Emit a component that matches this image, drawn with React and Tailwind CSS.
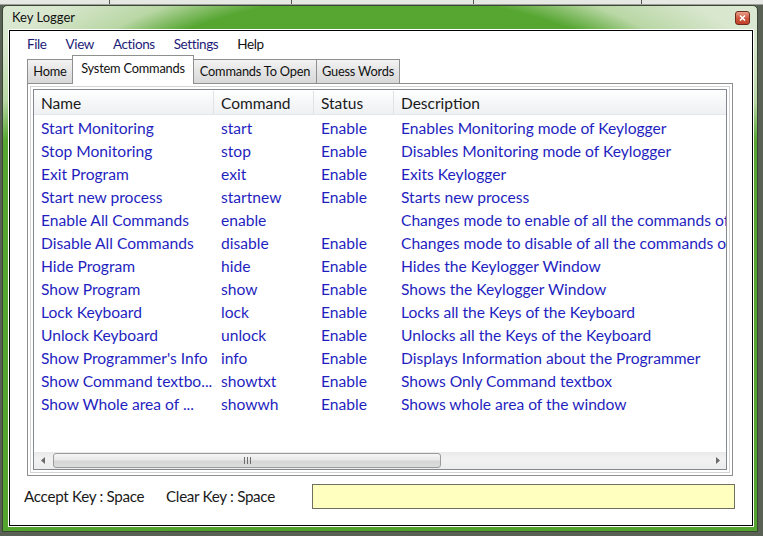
import React from 'react';

const rows = [
  ['Start Monitoring', 'start', 'Enable', 'Enables Monitoring mode of Keylogger'],
  ['Stop Monitoring', 'stop', 'Enable', 'Disables Monitoring mode of Keylogger'],
  ['Exit Program', 'exit', 'Enable', 'Exits Keylogger'],
  ['Start new process', 'startnew', 'Enable', 'Starts new process'],
  ['Enable All Commands', 'enable', '', 'Changes mode to enable of all the commands of Keylogger'],
  ['Disable All Commands', 'disable', 'Enable', 'Changes mode to disable of all the commands of Keylogger'],
  ['Hide Program', 'hide', 'Enable', 'Hides the Keylogger Window'],
  ['Show Program', 'show', 'Enable', 'Shows the Keylogger Window'],
  ['Lock Keyboard', 'lock', 'Enable', 'Locks all the Keys of the Keyboard'],
  ['Unlock Keyboard', 'unlock', 'Enable', 'Unlocks all the Keys of the Keyboard'],
  ["Show Programmer's Info", 'info', 'Enable', 'Displays Information about the Programmer'],
  ['Show Command textbo...', 'showtxt', 'Enable', 'Shows Only Command textbox'],
  ['Show Whole area of ...', 'showwh', 'Enable', 'Shows whole area of the window'],
];

const tabs = [
  { label: 'Home', w: 'w-[46px]' },
  { label: 'System Commands', w: 'w-[122px]', active: true },
  { label: 'Commands To Open', w: 'w-[124px]' },
  { label: 'Guess Words', w: 'w-[84px]' },
];

const menu = ['File', 'View', 'Actions', 'Settings', 'Help'];

const App = () => {
  return (
    <div className="w-[763px] h-[536px] bg-[#596054] overflow-hidden flex flex-col font-['Lato',sans-serif]">
      {/* desktop strip above the window */}
      <div className="h-[5px] flex bg-[#e6e8e4] border-b border-[#9ca098]">
        <div className="w-[110px] border-r border-[#555]" />
        <div className="w-[182px] border-r border-[#555]" />
        <div className="w-[182px] border-r border-[#555]" />
        <div className="w-[168px] border-r border-[#555]" />
      </div>

      <div className="flex pl-[2px]">
        {/* Window frame */}
        <div className="w-[756px] h-[527px] rounded-t-[5px] border border-[#3b4637] flex flex-col bg-[radial-gradient(circle_at_50%_544px,#4fa129_0px,#56a631_555px,#b9d7a5_585px,#d9e7cf_630px,#e8efe3_800px)]">
          {/* Title bar */}
          <div className="h-[23px] flex items-center justify-between pl-[9px] pr-[7px]">
            <span className="text-[13px] text-[#111] leading-none">Key Logger</span>
            <div className="w-[15px] h-[14px] rounded-[3px] border border-[#6e2a1c] bg-[linear-gradient(#eaa08a,#d05a40_50%,#c0402a)] flex items-center justify-center">
              <svg width="7" height="6" viewBox="0 0 7 6">
                <path d="M1 0.5 L6 5.5 M6 0.5 L1 5.5" stroke="#fff" strokeWidth="1.6" />
              </svg>
            </div>
          </div>

          {/* Client area */}
          <div className="mt-[1px] ml-[6px] w-[744px] h-[496px] bg-white border border-black shadow-[0_0_0_1px_#ffffff] flex flex-col">
            {/* Menu bar */}
            <div className="h-[24px] flex items-center pl-[17px] gap-[19px] pt-[3px] text-[13.5px] tracking-[-0.4px] leading-none">
              {menu.map((m) => (
                <span key={m} className={m === 'Help' ? 'text-[#111]' : 'text-[#1c1c78]'}>{m}</span>
              ))}
            </div>

            {/* Tabs */}
            <div className="h-[28px] flex items-end pl-[17px] relative z-10">
              {tabs.map((t, i) => (
                <div
                  key={t.label}
                  className={`${t.w} ${i > 0 ? '-ml-px' : ''} border border-[#8e8f8f] border-b-0 flex items-center justify-center text-[12.8px] tracking-[-0.2px] text-[#111] leading-none whitespace-nowrap ${
                    t.active
                      ? 'h-[29px] -mb-px bg-white relative z-10 pb-[3px]'
                      : 'h-[24px] bg-[linear-gradient(#f3f3f3,#e4e4e4_50%,#d8d8d8)]'
                  }`}
                >
                  {t.label}
                </div>
              ))}
            </div>

            {/* Tab panel */}
            <div className="ml-[17px] w-[706px] h-[393px] border border-[#8e8f8f] p-[2px]">
              <div className="w-full h-full border border-[#d4d4d4] p-[2px]">
                {/* List view */}
                <div className="w-full h-full border border-[#828790] flex flex-col">
                  {/* Header */}
                  <div className="h-[25px] flex bg-[linear-gradient(#ffffff,#f6f7f8_50%,#f0f1f3)] border-b border-[#e3e5e8] text-[15.5px] text-[#1a1a1a] leading-[20px] pt-[1px]">
                    <div className="w-[180px] pl-[7px] flex items-center border-r border-[#e1e2e4]">Name</div>
                    <div className="w-[100px] pl-[7px] flex items-center border-r border-[#e1e2e4]">Command</div>
                    <div className="w-[80px] pl-[7px] flex items-center border-r border-[#e1e2e4]">Status</div>
                    <div className="flex-1 pl-[7px] flex items-center">Description</div>
                  </div>

                  {/* Rows */}
                  <div className="flex-1 overflow-hidden pt-[1px] text-[15.6px] text-[#1f1fbf] leading-[20px]">
                    {rows.map((r) => (
                      <div key={r[0]} className="h-[23px] flex items-center whitespace-nowrap">
                        <div className="w-[180px] pl-[7px] overflow-hidden">{r[0]}</div>
                        <div className="w-[100px] pl-[7px]">{r[1]}</div>
                        <div className="w-[80px] pl-[7px]">{r[2]}</div>
                        <div className="flex-1 pl-[7px] overflow-hidden">{r[3]}</div>
                      </div>
                    ))}
                  </div>

                  {/* Horizontal scrollbar */}
                  <div className="h-[17px] flex items-center bg-[linear-gradient(#e9e9e9,#f2f2f2_40%,#ececec)]">
                    <div className="w-[17px] h-full flex items-center justify-center">
                      <svg width="4" height="7" viewBox="0 0 4 7">
                        <path d="M4 0 L0 3.5 L4 7 Z" fill="#6a6a6a" />
                      </svg>
                    </div>
                    <div className="ml-[2px] w-[388px] h-[15px] rounded-[3px] border border-[#9b9b9b] bg-[linear-gradient(#f6f6f6,#e8e8e8_45%,#d6d6d6_55%,#dcdcdc)] flex items-center justify-center">
                      <div className="flex gap-[2px]">
                        <div className="w-px h-[7px] bg-[#6c6c6c]" />
                        <div className="w-px h-[7px] bg-[#6c6c6c]" />
                        <div className="w-px h-[7px] bg-[#6c6c6c]" />
                      </div>
                    </div>
                    <div className="flex-1" />
                    <div className="w-[17px] h-full flex items-center justify-center">
                      <svg width="4" height="7" viewBox="0 0 4 7">
                        <path d="M0 0 L4 3.5 L0 7 Z" fill="#6a6a6a" />
                      </svg>
                    </div>
                  </div>
                </div>
              </div>
            </div>

            {/* Bottom bar */}
            <div className="mt-[8px] h-[25px] flex items-center text-[15.2px] text-[#1a1a1a] tracking-[-0.3px] leading-none">
              <div className="w-[156px] pl-[14px]">Accept Key : Space</div>
              <div className="w-[146px]">Clear Key : Space</div>
              <div className="w-[423px] h-[25px] bg-[#ffffc0] border border-[#6f6f5e]" />
            </div>
          </div>
        </div>
      </div>
    </div>
  );
};

export default App;
